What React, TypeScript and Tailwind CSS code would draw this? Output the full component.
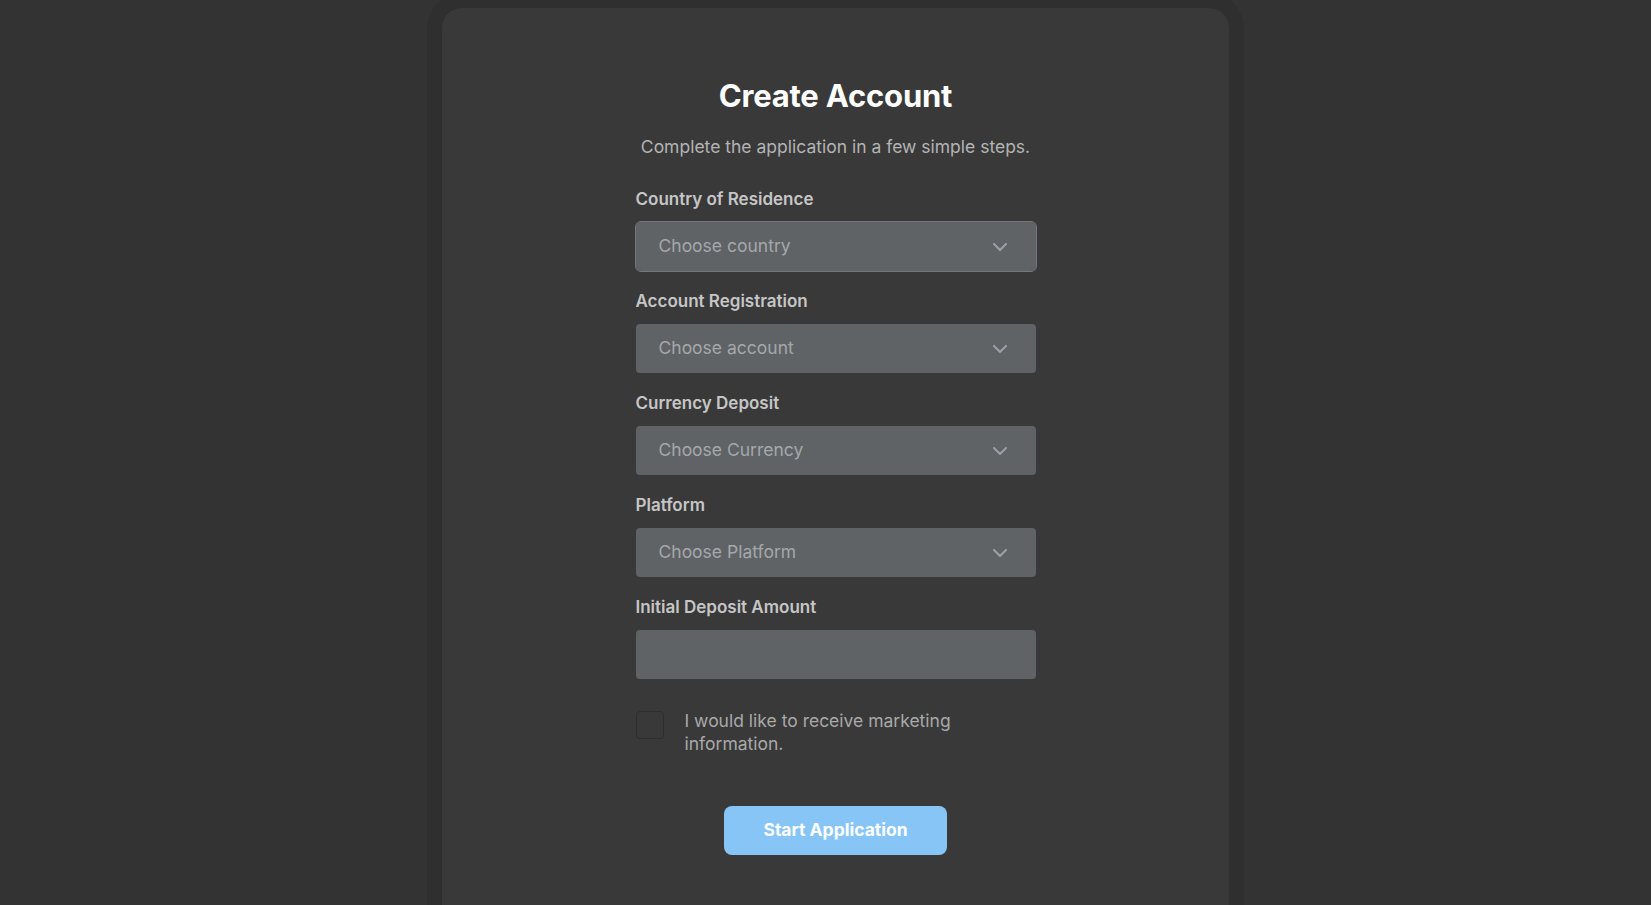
import { FC } from 'react';

const fields = [
  { label: 'Country of Residence', placeholder: 'Choose country', focused: true },
  { label: 'Account Registration', placeholder: 'Choose account' },
  { label: 'Currency Deposit', placeholder: 'Choose Currency' },
  { label: 'Platform', placeholder: 'Choose Platform' },
];

const Chevron: FC = () => (
  <svg width="14" height="8" viewBox="0 0 14 8" fill="none" className="shrink-0">
    <polyline points="1,1 7,7 13,1" stroke="#9da1a5" strokeWidth="2" strokeLinecap="round" strokeLinejoin="round" />
  </svg>
);

const App: FC = () => {
  return (
    <div
      className="h-screen overflow-hidden bg-[#333333] flex justify-center pl-[20px] pt-2"
      style={{ fontFamily: 'Inter, "Noto Sans", sans-serif' }}
    >
      <div className="w-[787px] min-h-[960px] shrink-0 bg-[#393939] rounded-[20px] shadow-[0_0_0_15px_rgba(0,0,0,0.08)] flex flex-col items-center pt-[70px]">
        <h1 className="text-[31px] leading-[36px] font-bold text-white tracking-[-0.2px]">Create Account</h1>
        <p className="mt-[21px] text-[17.5px] leading-[24px] text-[#b4b4b4]">
          Complete the application in a few simple steps.
        </p>

        <form className="mt-[28px] w-[400px] flex flex-col gap-[18px]" onSubmit={(e) => e.preventDefault()}>
          {fields.map((f) => (
            <div key={f.label} className="flex flex-col">
              <label className="text-[17px] leading-[24px] font-semibold text-[#c6c6c6] mb-[11px]">{f.label}</label>
              <button
                type="button"
                className={
                  f.focused
                    ? 'h-[49px] w-full rounded-[5px] bg-[#5f6366] flex items-center justify-between pl-[23px] pr-[29px] outline outline-1 outline-[#74787c]'
                    : 'h-[49px] w-full rounded-[4px] bg-[#5f6366] flex items-center justify-between pl-[23px] pr-[29px]'
                }
              >
                <span className="text-[17.5px] text-[#a4a8ab]">{f.placeholder}</span>
                <Chevron />
              </button>
            </div>
          ))}

          <div className="flex flex-col">
            <label className="text-[17px] leading-[24px] font-semibold text-[#c6c6c6] mb-[11px]">Initial Deposit Amount</label>
            <input
              type="text"
              className="h-[49px] w-full rounded-[4px] bg-[#5f6366] px-[23px] text-[17.5px] text-[#d0d0d0] outline-none"
            />
          </div>

          <label className="mt-[12px] flex items-start gap-[21px] cursor-pointer">
            <span className="mt-[2px] w-[28px] h-[28px] shrink-0 rounded-[4px] border border-[#2e2e2e]" />
            <span className="text-[17.5px] leading-[23px] text-[#a9a9a9] w-[300px]">
              I would like to receive marketing information.
            </span>
          </label>

          <div className="mt-[33px] flex justify-center">
            <button
              type="submit"
              className="w-[223px] h-[49px] rounded-[8px] bg-[#86c5f6] text-white text-[17.5px] font-bold"
            >
              Start Application
            </button>
          </div>
        </form>
      </div>
    </div>
  );
};

export default App;
